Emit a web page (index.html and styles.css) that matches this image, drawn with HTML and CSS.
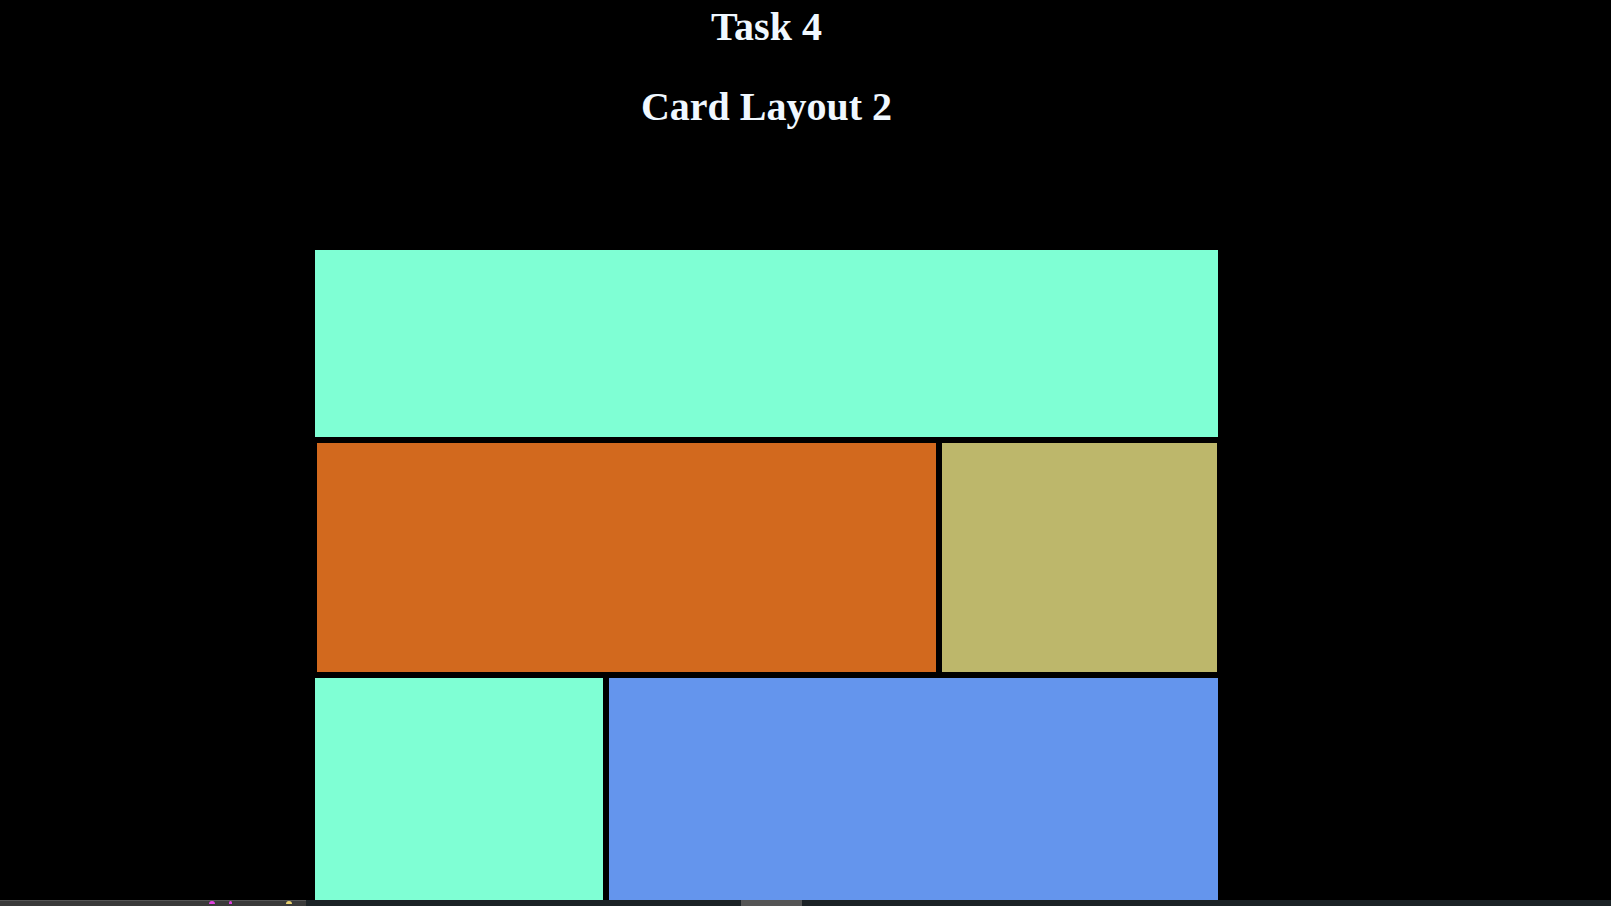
FILE: index.html
```html
<!DOCTYPE html>
<html lang="en">
<head>
  <meta charset="UTF-8" />
  <title>Task 4 - Card Layout 2</title>
  <link rel="stylesheet" href="styles.css">
</head>
<body>
  <div class="page">
    <h1 class="title">Task 4</h1>
    <h2 class="subtitle">Card Layout 2</h2>

    <div class="cards">
      <div class="row row-top">
        <div class="card aqua"></div>
      </div>
      <div class="row row-mid">
        <div class="card orange wide"></div>
        <div class="card khaki fill"></div>
      </div>
      <div class="row row-bottom">
        <div class="card aqua narrow"></div>
        <div class="card blue fill"></div>
      </div>
    </div>
  </div>

  <div class="strip">
    <div class="strip-left">
      <span class="dot pink"></span>
      <span class="dot pink small"></span>
      <span class="dot yellow"></span>
    </div>
    <div class="strip-gap"></div>
    <div class="strip-thumb"></div>
    <div class="strip-rest"></div>
  </div>
</body>
</html>
```

FILE: styles.css
```css
html, body { margin: 0; padding: 0; overflow: hidden; }
body { background: #000; font-family: "Liberation Serif", "Times New Roman", serif; }

.page { width: 1533px; text-align: center; }
.title, .subtitle { color: aliceblue; font-size: 40px; font-weight: 700; line-height: 44px; }
.title { margin: 5px 0 0; }
.subtitle { margin: 36px 0 0; }

.cards { width: 903px; margin: 121px auto 0; display: flex; flex-direction: column; gap: 6px; }
.row { display: flex; gap: 6px; }
.row-top { height: 187px; }
.row-mid { height: 229px; padding: 0 1px 0 2px; }
.row-bottom { height: 222px; }

.card { flex: none; }
.row-top .card { flex: 1; }
.wide { width: 619px; }
.narrow { width: 288px; }
.fill { flex: 1; }

.aqua { background: aquamarine; }
.orange { background: chocolate; }
.khaki { background: darkkhaki; }
.blue { background: cornflowerblue; }

.strip { display: flex; height: 6px; background: #1b2226; }
.strip-left { width: 306px; background: #3a3a3a; border-top: 1px solid #555; box-sizing: border-box; display: flex; align-items: flex-start; padding-left: 209px; gap: 14px; }
.dot { width: 6px; height: 3px; border-radius: 3px 3px 0 0; }
.dot.small { width: 3px; margin-right: 40px; }
.pink { background: #e040e0; }
.yellow { background: #e8d070; }
.strip-gap { width: 435px; }
.strip-thumb { width: 61px; background: #555; }
.strip-rest { flex: 1; }
```
